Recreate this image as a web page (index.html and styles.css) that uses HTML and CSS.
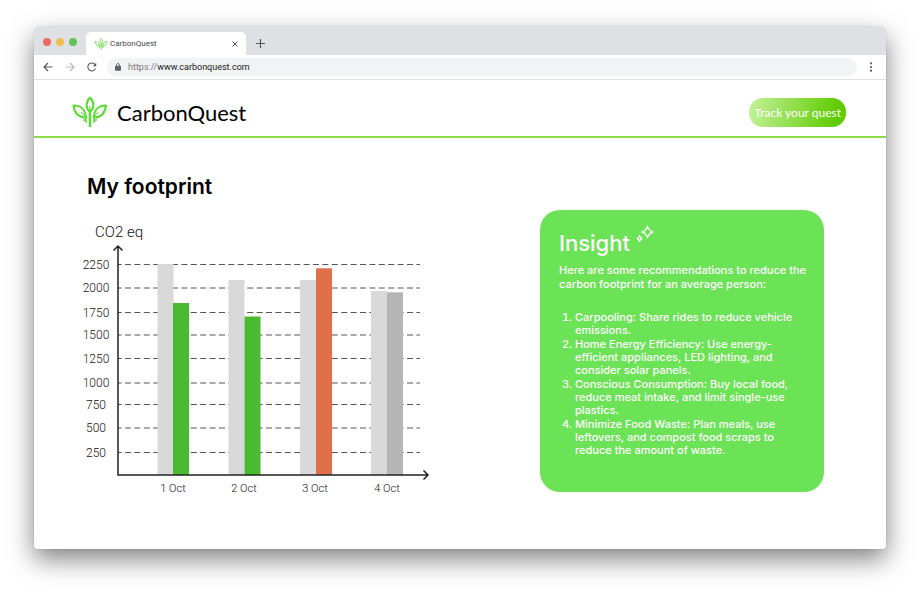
FILE: index.html
```
<!DOCTYPE html>
<html lang="en">
<head>
<meta charset="utf-8">
<meta name="viewport" content="width=device-width, initial-scale=1">
<title>CarbonQuest</title>
<link rel="stylesheet" href="styles.css">
</head>
<body>
<svg class="defs" width="0" height="0" aria-hidden="true">
  <symbol id="leaf" viewBox="0 0 35 32">
    <g fill="none" stroke="#5bdc35" stroke-width="2" stroke-linejoin="round">
      <path d="M18 16C13.500 12 13.500 6 18 1.500C22.500 6 22.500 12 18 16Z"/>
      <path d="M14 21.500C7 21.500 2.500 17 1.500 9.500C8 9 13.500 13 14 21.500Z"/>
      <path d="M22 21.500C29 21.500 33 17 34 9.500C27.500 9 22 13 22 21.500Z"/>
      <path d="M9 16L14 21M26.500 16L22 21M18 10V17" stroke-width="1"/>
      <path d="M18 16V31" stroke-width="2.500"/>
      <path d="M14 20V27M22 20V27M11 24H14M22 24H25" stroke-width="1.500"/>
    </g>
  </symbol>
</svg>
<div class="window">
  <div class="tabs">
    <div class="lights"><span class="light red"></span><span class="light amber"></span><span class="light green"></span></div>
    <div class="tab">
      <svg class="favicon" width="14" height="12"><use href="#leaf"/></svg>
      <span class="tab-title">CarbonQuest</span>
      <button class="icon-button" aria-label="Close tab"><svg width="6" height="6" viewBox="0 0 6 6"><path d="M.5.5l5 5M5.500.5l-5 5" stroke="#55585c" fill="none"/></svg></button>
    </div>
    <button class="icon-button new-tab" aria-label="New tab"><svg width="9" height="9" viewBox="0 0 9 9"><path d="M4.500 0v9M0 4.500h9" stroke="#55585c" stroke-width="1.200"/></svg></button>
  </div>
  <div class="toolbar">
    <button class="icon-button" aria-label="Back"><svg width="10" height="10" viewBox="0 0 10 10"><path d="M9.500 5H1M5 1L1 5l4 4" fill="none" stroke="#55585c" stroke-width="1.200"/></svg></button>
    <button class="icon-button" aria-label="Forward"><svg width="10" height="10" viewBox="0 0 10 10"><path d="M.5 5H9M5 1l4 4-4 4" fill="none" stroke="#b9bbbe" stroke-width="1.200"/></svg></button>
    <button class="icon-button" aria-label="Reload"><svg width="10" height="10" viewBox="0 0 10 10"><path d="M8 2.500A4 4 0 1 0 8.500 6.500" fill="none" stroke="#55585c" stroke-width="1.100"/><path d="M9.200.8v3.400H5.800Z" fill="#55585c"/></svg></button>
    <div class="address">
      <svg width="6" height="8" viewBox="0 0 7 9"><rect y="3" width="7" height="6" rx="1" fill="#5f6368"/><path d="M1.700 3.500V2.300a1.800 1.800 0 0 1 3.600 0V3.500" fill="none" stroke="#5f6368"/></svg>
      <span class="url"><span class="scheme">https://</span>www.carbonquest.com</span>
    </div>
    <button class="icon-button menu" aria-label="Menu"><svg width="4" height="10" viewBox="0 0 4 10" fill="#55585c"><circle cx="2" cy="1.300" r="1.100"/><circle cx="2" cy="5" r="1.100"/><circle cx="2" cy="8.700" r="1.100"/></svg></button>
  </div>
  <header class="site-header">
    <a class="brand" href="#"><svg width="35" height="32" aria-hidden="true"><use href="#leaf"/></svg><span>CarbonQuest</span></a>
    <button class="track">Track your quest</button>
  </header>
  <main class="content">
    <section class="footprint">
      <h1>My footprint</h1>
      <svg class="chart" width="354" height="280" viewBox="0 0 354 280" role="img" aria-label="Daily carbon footprint in CO2 equivalent">
        <text class="unit" x="15" y="17">CO2 eq</text>
        <g class="grid">
          <path d="M38 44.500H340M38 68H340M38 92.500H340M38 115H340M38 138.500H340M38 163H340M38 184.500H340M38 208H340M38 232.500H340"/>
        </g>
        <g class="scale">
          <text x="16" y="49">2250</text><text x="16" y="72">2000</text><text x="16" y="97">1750</text>
          <text x="16" y="119">1500</text><text x="16" y="143">1250</text><text x="16" y="167">1000</text>
          <text x="16" y="189">750</text><text x="16" y="212">500</text><text x="16" y="237">250</text>
        </g>
        <g fill="#d9d9d9">
          <rect x="77.500" y="44" width="16" height="211"/><rect x="148.500" y="60" width="16" height="195"/>
          <rect x="220" y="60" width="16" height="195"/><rect x="291" y="71" width="16" height="184"/>
        </g>
        <rect x="93" y="83" width="16" height="172" fill="#4aba30"/>
        <rect x="164.500" y="96.500" width="16" height="158.500" fill="#4aba30"/>
        <rect x="236" y="48.300" width="16" height="206.700" fill="#df7049"/>
        <rect x="307" y="72.300" width="16" height="182.700" fill="#b5b5b5"/>
        <path class="axis" d="M33.500 30.500L38 26l4.500 4.500M38 26V255H348M343.500 250.500L348 255l-4.500 4.500"/>
        <g class="days">
          <text x="93" y="272">1 Oct</text><text x="164" y="272">2 Oct</text><text x="235" y="272">3 Oct</text><text x="307" y="272">4 Oct</text>
        </g>
      </svg>
    </section>
    <aside class="insight">
      <h2>Insight <svg width="18" height="18" viewBox="0 0 18 18" fill="none" stroke="#fff" aria-hidden="true"><path d="M11.500 2Q13 5.500 16.500 7Q13 8.500 11.500 12Q10 8.500 6.500 7Q10 5.500 11.500 2Z" stroke-width="1.500"/><path d="M3.500 11L5.500 13.500L3.500 16L1.500 13.500Z" stroke-width="1.500"/></svg></h2>
      <p>Here are some recommendations to reduce the<br>carbon footprint for an average person:</p>
      <ol>
        <li>Carpooling: Share rides to reduce vehicle<br>emissions.</li>
        <li>Home Energy Efficiency: Use energy-<br>efficient appliances, LED lighting, and<br>consider solar panels.</li>
        <li>Conscious Consumption: Buy local food,<br>reduce meat intake, and limit single-use<br>plastics.</li>
        <li>Minimize Food Waste: Plan meals, use<br>leftovers, and compost food scraps to<br>reduce the amount of waste.</li>
      </ol>
    </aside>
  </main>
</div>
</body>
</html>
```
FILE: styles.css
```
* { box-sizing: border-box; }
body {
  margin: 0;
  min-height: 100vh;
  padding: 27px 34px 40px;
  display: flex;
  background: #fff;
  color: #000;
  font-family: Inter, sans-serif;
}
.defs { position: absolute; }
button { border: 0; padding: 0; font: inherit; cursor: pointer; }
svg { display: block; flex: none; }
.window {
  flex: 1;
  min-width: 0;
  border-radius: 5px 5px 3px 3px;
  background: #fff;
  overflow: hidden;
  box-shadow: 0 0 1px rgba(0, 0, 0, .4), 0 10px 26px rgba(0, 0, 0, .5);
}
.tabs {
  display: flex;
  align-items: flex-end;
  height: 28px;
  padding-left: 9px;
  background: #dee0e4;
}
.lights { display: flex; gap: 5px; padding-bottom: 9px; }
.light { width: 8px; height: 8px; border-radius: 50%; }
.red { background: #ec6a5e; }
.amber { background: #f4bf4f; }
.green { background: #61c554; }
.tab {
  display: flex;
  align-items: center;
  width: 160px;
  height: 23px;
  margin-left: 9px;
  padding: 0 8px;
  border-radius: 5px 5px 0 0;
  background: #fff;
}
.tab-title {
  flex: 1;
  margin-left: 2px;
  font: 8px Roboto, sans-serif;
  color: #45494d;
}
.icon-button { display: flex; background: none; }
.new-tab { margin: 0 0 7px 10px; }
.toolbar {
  display: flex;
  align-items: center;
  gap: 12px;
  height: 25px;
  padding: 0 13px 0 9px;
  border-bottom: 1px solid #dee0e2;
}
.address {
  display: flex;
  flex: 1;
  align-items: center;
  gap: 7px;
  height: 18px;
  margin-left: -2px;
  padding: 0 8px;
  border-radius: 9px;
  background: #f1f3f4;
}
.url { font: 9px Roboto, sans-serif; color: #202124; }
.scheme { color: #777a7e; }
.site-header {
  display: flex;
  align-items: center;
  justify-content: space-between;
  height: 58px;
  padding: 8px 40px 0 38px;
  border-bottom: 2px solid #8bdc48;
}
.brand {
  display: flex;
  align-items: center;
  gap: 10px;
  color: #000;
  text-decoration: none;
  font: 22px Lato, sans-serif;
}
.track {
  height: 29px;
  padding: 0 5px;
  border-radius: 14px;
  background: linear-gradient(100deg, #c4f29a, #5fcb00 90%);
  color: #fff;
  font: 12px Lato, sans-serif;
}
.content {
  display: grid;
  grid-template-columns: minmax(0, 1fr) 284px;
  padding: 36px 62px 40px 46px;
}
h1 {
  margin: 0 0 20px 7px;
  font: 600 21px/26px Inter, sans-serif;
}
.chart text { font: 300 12px Roboto, sans-serif; fill: #111; text-anchor: middle; }
.chart .unit { font-size: 15px; text-anchor: start; }
.chart .days text { font-size: 11px; }
.grid { stroke: #555; stroke-dasharray: 6 3.400; stroke-dashoffset: 2.400; }
.axis { fill: none; stroke: #222; stroke-width: 1.500; }
.insight {
  align-self: start;
  margin-top: 36px;
  padding: 15px 19px 35px;
  border-radius: 20px;
  background: #6ce256;
  color: #fff;
  font-size: 11px;
  font-weight: 500;
}
.insight h2 {
  display: flex;
  gap: 6px;
  margin: 0 0 2px;
  font: 500 22px/36px Inter, sans-serif;
}
.insight p { margin: 0 0 20px; line-height: 14px; white-space: nowrap; }
.insight ol {
  display: grid;
  gap: 1px;
  margin: 0;
  padding-left: 16px;
  line-height: 13px;
  white-space: nowrap;
}
```
